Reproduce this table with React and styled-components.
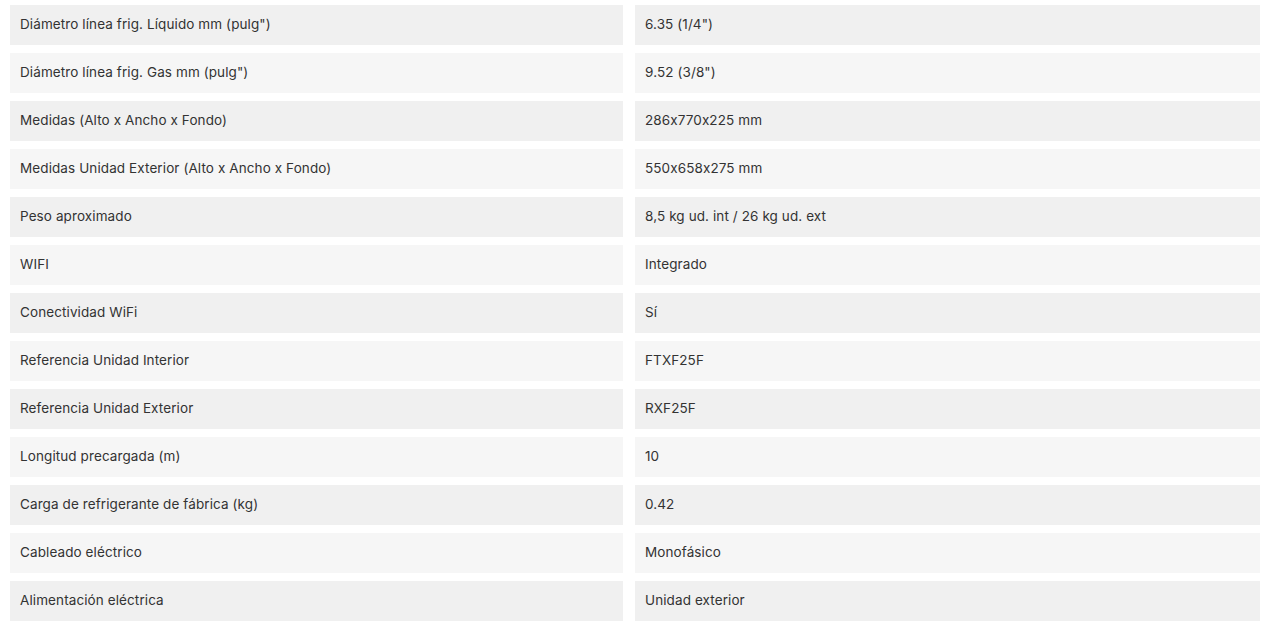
import React from "react";
import styled, { createGlobalStyle } from "styled-components";

const GlobalStyle = createGlobalStyle`
  body {
    margin: 0;
    background: #ffffff;
    font-family: Inter, "Open Sans", sans-serif;
  }
`;

const Wrapper = styled.div`
  padding: 5px 12px 10px 10px;
`;

const Table = styled.div`
  display: grid;
  grid-template-columns: 613px 625px;
  column-gap: 12px;
  row-gap: 8px;
`;

const Cell = styled.div`
  height: 40px;
  display: flex;
  align-items: center;
  padding: 0 10px 3px;
  box-sizing: border-box;
  background: ${({ $odd }) => ($odd ? "#f0f0f0" : "#f6f6f6")};
  color: #333333;
  font-size: 13.5px;
  letter-spacing: 0.1px;
  white-space: nowrap;
`;

const specs = [
  ["Diámetro línea frig. Líquido mm (pulg\")", "6.35 (1/4\")"],
  ["Diámetro línea frig. Gas mm (pulg\")", "9.52 (3/8\")"],
  ["Medidas (Alto x Ancho x Fondo)", "286x770x225 mm"],
  ["Medidas Unidad Exterior (Alto x Ancho x Fondo)", "550x658x275 mm"],
  ["Peso aproximado", "8,5 kg ud. int / 26 kg ud. ext"],
  ["WIFI", "Integrado"],
  ["Conectividad WiFi", "Sí"],
  ["Referencia Unidad Interior", "FTXF25F"],
  ["Referencia Unidad Exterior", "RXF25F"],
  ["Longitud precargada (m)", "10"],
  ["Carga de refrigerante de fábrica (kg)", "0.42"],
  ["Cableado eléctrico", "Monofásico"],
  ["Alimentación eléctrica", "Unidad exterior"],
];

const App = () => {
  return (
    <>
      <GlobalStyle />
      <Wrapper>
        <Table>
          {specs.map(([label, value], i) => (
            <React.Fragment key={label}>
              <Cell $odd={i % 2 === 0}>{label}</Cell>
              <Cell $odd={i % 2 === 0}>{value}</Cell>
            </React.Fragment>
          ))}
        </Table>
      </Wrapper>
    </>
  );
};

export default App;
